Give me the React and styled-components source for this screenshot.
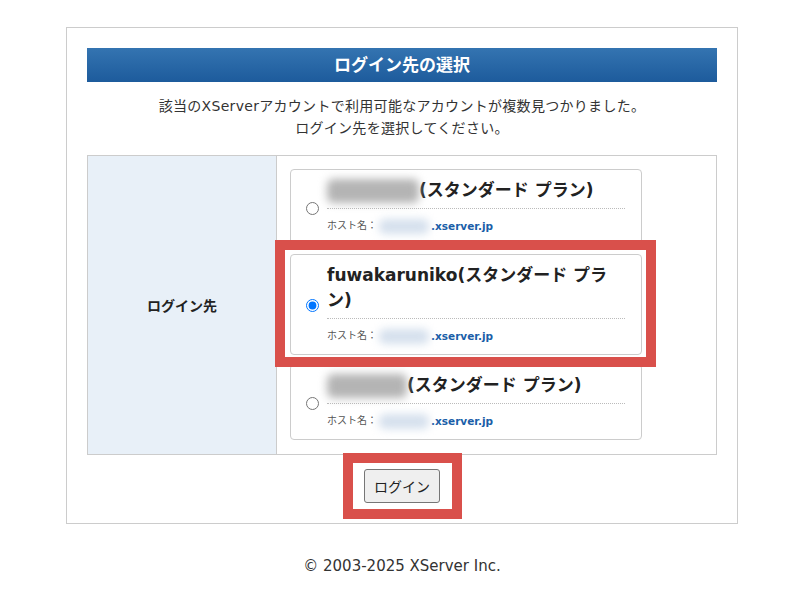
import React from 'react';
import styled, { createGlobalStyle } from 'styled-components';

const GlobalStyle = createGlobalStyle`
    body {
        margin: 0;
        background: #fff;
        color: #333;
        font-family: "DejaVu Sans", "Noto Sans CJK JP", sans-serif;
    }
`

const Page = styled.div`
    padding: 27px 0 0 4px;
`

const Panel = styled.div`
    width: 672px;
    margin: 0 auto;
    box-sizing: border-box;
    border: 1px solid #ccc;
    padding: 20px;
    display: flex;
    flex-direction: column;
    align-items: center;
`

const Title = styled.h1`
    width: 100%;
    height: 34px;
    margin: 0;
    background: linear-gradient(#3474b1, #1d5b9c);
    color: #fff;
    font-size: 17px;
    font-weight: bold;
    line-height: 34px;
    text-align: center;
`

const Lead = styled.p`
    margin: 13px 0 16px;
    font-size: 14px;
    letter-spacing: 0.3px;
    line-height: 22px;
    text-align: center;
    color: #333;
`

const Table = styled.div`
    width: 100%;
    box-sizing: border-box;
    display: grid;
    grid-template-columns: 189px 1fr;
    border: 1px solid #ccc;
`

const LabelCell = styled.div`
    background: #e8f0f8;
    border-right: 1px solid #ccc;
    display: flex;
    align-items: center;
    justify-content: center;
    font-size: 14px;
    font-weight: bold;
    color: #222;
`

const ChoiceCell = styled.div`
    padding: 13px 0 14px 13px;
    display: flex;
    flex-direction: column;
    gap: 9px;
`

const Card = styled.label`
    position: relative;
    width: 352px;
    box-sizing: border-box;
    border: 1px solid #ccc;
    border-radius: 4px;
    background: #fff;
    padding: 8px 16px 10px 15px;
    display: flex;
    align-items: center;
    gap: 8px;
`

const Radio = styled.input`
    width: 13px;
    height: 13px;
    margin: 4px 0 0;
    flex: none;
`

const Body = styled.div`
    flex: 1;
    min-width: 0;
`

const Name = styled.div`
    font-size: 17px;
    font-weight: bold;
    line-height: 25px;
    color: #222;
    padding-bottom: 5px;
    border-bottom: 1px dotted #bbb;
`

const Blur = styled.span`
    display: inline-block;
    vertical-align: middle;
    width: ${props => props.$w}px;
    height: ${props => props.$h}px;
    background: ${props => props.$color};
    filter: blur(4px);
    border-radius: 6px;
`

const Host = styled.div`
    margin-top: 9px;
    line-height: 16px;
    font-size: 10px;
    color: #555;
    display: flex;
    align-items: center;
    gap: 2px;

    b {
        font-size: 10.5px;
        color: #1a5ea8;
    }
`

const Highlight = styled.div`
    position: absolute;
    inset: ${props => props.$inset};
    border: 10px solid #d9504b;
    pointer-events: none;
    z-index: 2;
`

const ButtonWrap = styled.div`
    position: relative;
    margin-top: 14px;
`

const Button = styled.button`
    width: 76px;
    height: 34px;
    background: #efefef;
    border: 1px solid #767676;
    border-radius: 3px;
    font-family: "DejaVu Sans", "Noto Sans CJK JP", sans-serif;
    font-size: 14px;
    color: #222;
`

const Footer = styled.footer`
    margin-top: 32px;
    text-align: center;
    font-size: 15px;
    line-height: 20px;
    color: #333;
`

const accounts = [
    { blur: 92, name: '(スタンダード プラン)' },
    { name: 'fuwakaruniko(スタンダード プラン)', checked: true },
    { blur: 80, name: '(スタンダード プラン)' },
];

const App = () => {
    return (
        <Page>
            <GlobalStyle/>
            <Panel>
                <Title>ログイン先の選択</Title>
                <Lead>
                    該当のXServerアカウントで利用可能なアカウントが複数見つかりました。<br/>
                    ログイン先を選択してください。
                </Lead>
                <Table>
                    <LabelCell>ログイン先</LabelCell>
                    <ChoiceCell>
                        {accounts.map((a, i) => (
                            <Card key={i}>
                                <Radio type="radio" name="account" defaultChecked={a.checked}/>
                                <Body>
                                    <Name>
                                        {a.blur && <Blur $w={a.blur} $h={24} $color="#b4b4b4"/>}
                                        {a.name}
                                    </Name>
                                    <Host>
                                        <span>ホスト名：</span>
                                        <Blur $w={50} $h={15} $color="#d5e0ed"/>
                                        <b>.xserver.jp</b>
                                    </Host>
                                </Body>
                                {a.checked && <Highlight $inset="-15px -15px -13px -16px"/>}
                            </Card>
                        ))}
                    </ChoiceCell>
                </Table>
                <ButtonWrap>
                    <Button>ログイン</Button>
                    <Highlight $inset="-16px -22px -16px -21px"/>
                </ButtonWrap>
            </Panel>
            <Footer>© 2003-2025 XServer Inc.</Footer>
        </Page>
    );
};

export default App;
